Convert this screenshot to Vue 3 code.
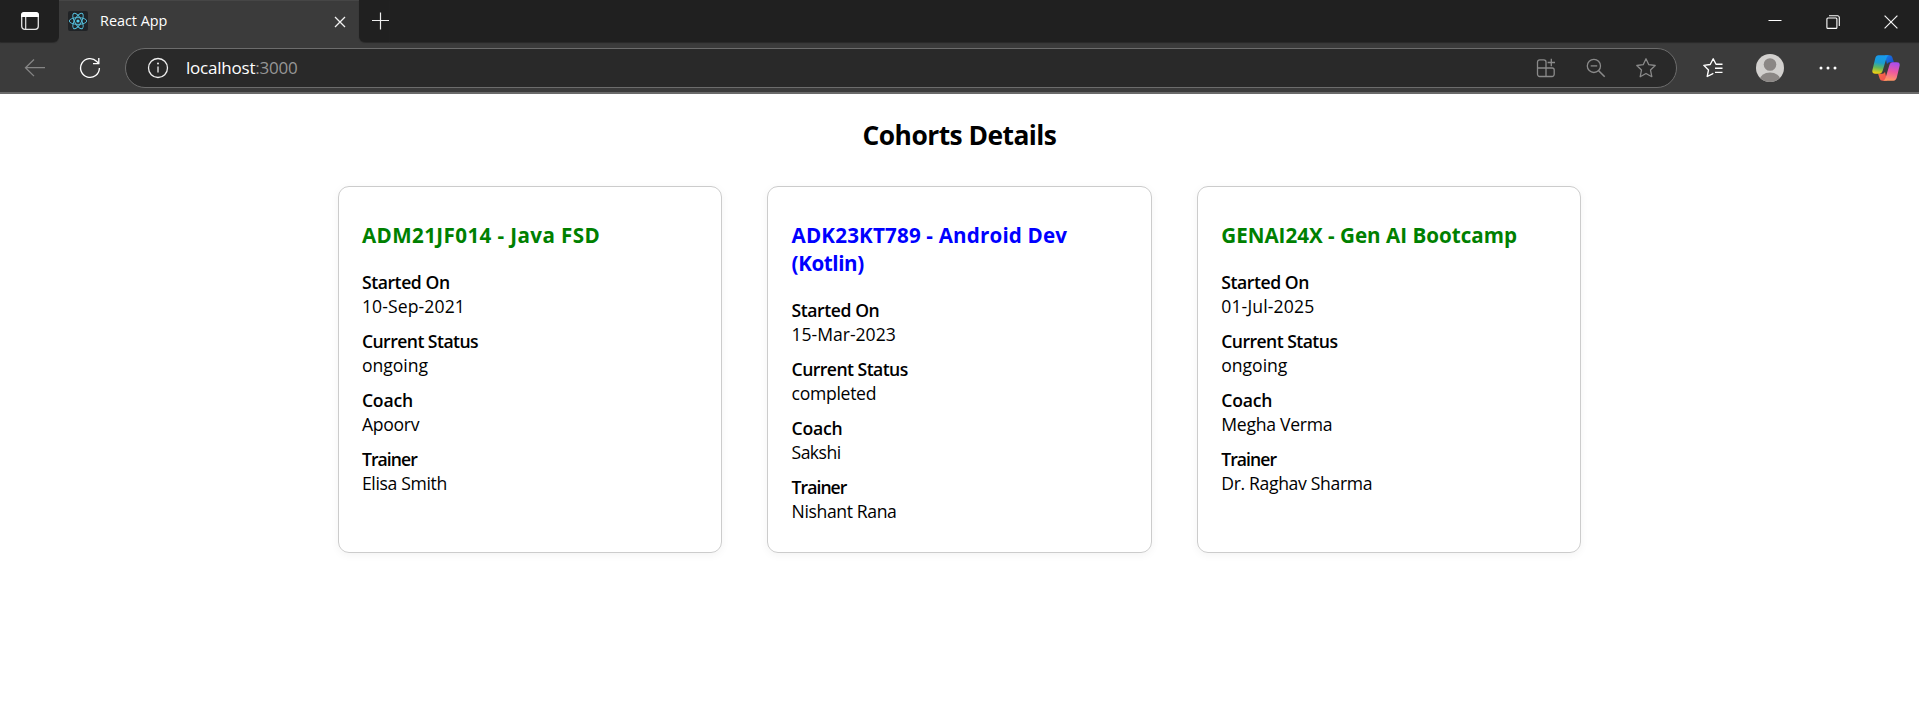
<script setup>
// "track" tunes the letter spacing (px) of each string.
const cohorts = [
  {
    id: 'ADM21JF014',
    status: 'ongoing',
    title: [{ text: 'ADM21JF014 - Java FSD', track: 0.4 }],
    fields: [
      { label: 'Started On', value: '10-Sep-2021', track: 0.1 },
      { label: 'Current Status', value: 'ongoing', track: -0.02 },
      { label: 'Coach', value: 'Apoorv', track: -0.3 },
      { label: 'Trainer', value: 'Elisa Smith', track: -0.35 },
    ],
  },
  {
    id: 'ADK23KT789',
    status: 'completed',
    title: [
      { text: 'ADK23KT789 - Android Dev ', track: 0.17 },
      { text: '(Kotlin)', track: -0.4 },
    ],
    fields: [
      { label: 'Started On', value: '15-Mar-2023', track: -0.03 },
      { label: 'Current Status', value: 'completed', track: -0.3 },
      { label: 'Coach', value: 'Sakshi', track: -0.55 },
      { label: 'Trainer', value: 'Nishant Rana', track: -0.38 },
    ],
  },
  {
    id: 'GENAI24X',
    status: 'ongoing',
    title: [{ text: 'GENAI24X - Gen AI Bootcamp', track: 0 }],
    fields: [
      { label: 'Started On', value: '01-Jul-2025', track: 0.14 },
      { label: 'Current Status', value: 'ongoing', track: -0.02 },
      { label: 'Coach', value: 'Megha Verma', track: -0.27 },
      { label: 'Trainer', value: 'Dr. Raghav Sharma', track: -0.34 },
    ],
  },
]
const labelTrack = { 'Started On': -0.43, 'Current Status': -0.55, Coach: -0.2, Trainer: -0.95 }
</script>

<template>
  <div class="window">
    <header class="tabs">
      <div class="tab-actions">
        <svg width="20" height="20" viewBox="0 0 20 20" fill="none">
          <rect x="1.7" y="1.7" width="16.6" height="16.6" rx="3" stroke="#e4e4e4" stroke-width="1.3" />
          <path d="M1 6V4.2A3.2 3.2 0 0 1 4.200 1h11.600A3.200 3.200 0 0 1 19 4.200V6z" fill="#fff" />
          <path d="M5.700 6v12" stroke="#e4e4e4" stroke-width="1.200" />
        </svg>
      </div>
      <div class="tab">
        <svg class="favicon" width="20" height="20" viewBox="0 0 20 20" fill="none" stroke="#53bdda" stroke-width=".95">
          <rect width="20" height="20" rx="2" fill="#202326" stroke="none" />
          <ellipse cx="10" cy="10" rx="8.700" ry="3.400" />
          <ellipse cx="10" cy="10" rx="8.700" ry="3.400" transform="rotate(60 10 10)" />
          <ellipse cx="10" cy="10" rx="8.700" ry="3.400" transform="rotate(120 10 10)" />
          <circle cx="10" cy="10" r="1.600" fill="#53d0f0" stroke="none" />
        </svg>
        <span class="tab-title">React App</span>
        <svg class="tab-close" width="12" height="12" viewBox="0 0 12 12" stroke="#f2f2f2" stroke-width="1.300">
          <path d="M1 1l10 10M11 1L1 11" />
        </svg>
      </div>
      <div class="new-tab">
        <svg width="18" height="18" viewBox="0 0 18 18" stroke="#eee" stroke-width="1.200"><path d="M8.500 .5v17M0 8.500h17" /></svg>
      </div>
      <div class="controls">
        <svg width="14" height="14" viewBox="0 0 14 14" stroke="#fff"><path d="M.5 5.500h13" /></svg>
        <svg width="14" height="14" viewBox="0 0 14 14" fill="none" stroke="#fff" stroke-width="1.100">
          <rect x=".9" y="3" width="10" height="10.400" rx="1" />
          <path d="M3 .8h8.500a1.800 1.800 0 0 1 1.800 1.800V11" />
        </svg>
        <svg width="14" height="14" viewBox="0 0 14 14" stroke="#f4f4f4" stroke-width="1.200"><path d="M.6.6l12.800 12.800M13.400.6L.6 13.400" /></svg>
      </div>
    </header>

    <nav class="toolbar">
      <svg class="back" width="22" height="20" viewBox="0 0 22 20" fill="none" stroke="#858585" stroke-width="1.300">
        <path d="M10 1.500L1.500 9.700l8.500 8.400M1.500 9.700H21" />
      </svg>
      <svg class="reload" width="22" height="22" viewBox="0 0 22 22" fill="none" stroke="#fff" stroke-width="1.350">
        <path d="M20.400 11A9.400 9.400 0 1 1 17.800 4.500L19.600 6.300" />
        <path d="M19.800 1v5.600h-5.800" />
      </svg>
      <div class="address">
        <svg class="info" width="22" height="22" viewBox="0 0 22 22" fill="none" stroke="#eee" stroke-width="1.300">
          <circle cx="11" cy="11" r="9.500" />
          <path d="M11 9.500v6" /><circle cx="11" cy="6.600" r="1" fill="#eee" stroke="none" />
        </svg>
        <span class="url">localhost<span class="port">:3000</span></span>
        <div class="page-actions">
          <svg width="20" height="20" viewBox="0 0 20 20" fill="none" stroke="#8a8a8a" stroke-width="1.300">
            <path d="M10 10V4a2.200 2.200 0 0 0-2.200-2.200H3.700A2.200 2.200 0 0 0 1.500 4v12.300a2.200 2.200 0 0 0 2.200 2.200H16a2.200 2.200 0 0 0 2.200-2.200V12A2 2 0 0 0 16.200 10H1.500M10 10v8.500M15.300.8v7.400M11.600 4.500H19" />
          </svg>
          <svg width="20" height="20" viewBox="0 0 20 20" fill="none" stroke="#8a8a8a" stroke-width="1.300">
            <circle cx="7.900" cy="7.900" r="6.600" /><path d="M4.700 7.900h6.500" /><path d="M12.700 12.700l6 6" stroke-width="1.600" />
          </svg>
          <svg width="22" height="22" viewBox="0 0 22 22" fill="none" stroke="#8a8a8a" stroke-width="1.300" stroke-linejoin="round">
            <path d="M11 1.800l2.800 5.900 6.400.8-4.700 4.500 1.300 6.700L11 16.500l-5.800 3.200L6.500 13 1.800 8.500l6.400-.8z" />
          </svg>
        </div>
      </div>
      <svg class="favorites" width="22" height="22" viewBox="0 0 22 22" fill="none" stroke="#fff" stroke-width="1.350" stroke-linejoin="round">
        <path d="M20.500 7.200H14L11.200 1.800 8.200 7.500 1.800 8.300l4.700 4.700-1.300 6.500 4.800-2.300 1.300-.9M13 11.200h7.500M13 15.300h7.500" />
      </svg>
      <svg class="avatar" width="28" height="28" viewBox="0 0 28 28">
        <defs><clipPath id="avatar-clip"><circle cx="14" cy="14" r="14" /></clipPath></defs>
        <g clip-path="url(#avatar-clip)">
          <rect width="28" height="28" fill="#d2d0ce" />
          <circle cx="14" cy="10.500" r="6.300" fill="#8b8785" />
          <ellipse cx="14" cy="26" rx="10.400" ry="7.600" fill="#8b8785" />
        </g>
      </svg>
      <svg class="more" width="18" height="4" viewBox="0 0 18 4" fill="#fff">
        <circle cx="2" cy="2" r="1.500" /><circle cx="9" cy="2" r="1.500" /><circle cx="16" cy="2" r="1.500" />
      </svg>
      <svg class="copilot" width="28" height="26" viewBox="0 0 28 26">
        <defs>
          <linearGradient id="cp-left" x1=".5" y1="0" x2=".35" y2="1">
            <stop offset="0" stop-color="#1799ef" /><stop offset=".4" stop-color="#1b9dcf" /><stop offset=".68" stop-color="#63b85a" /><stop offset="1" stop-color="#f5d211" />
          </linearGradient>
          <linearGradient id="cp-right" x1=".6" y1="0" x2=".4" y2="1">
            <stop offset="0" stop-color="#a64df0" /><stop offset=".5" stop-color="#ee58a0" /><stop offset="1" stop-color="#ff9a62" />
          </linearGradient>
          <linearGradient id="cp-top" x1="0" y1="0" x2="1" y2="1">
            <stop offset="0" stop-color="#1a7fe6" /><stop offset="1" stop-color="#1746c8" />
          </linearGradient>
          <linearGradient id="cp-bottom" x1="0" y1="0" x2="1" y2="1">
            <stop offset="0" stop-color="#f9723c" /><stop offset="1" stop-color="#f04a5a" />
          </linearGradient>
        </defs>
        <path d="M13 .3h4.500q2.200 0 2.900 2.200l1.500 4.800h-4.200q-2 0-2.700 2z" fill="url(#cp-top)" />
        <path d="M15 25.700h-4.500q-2.200 0-2.900-2.200L6.100 18.700h4.200q2 0 2.700-2z" fill="url(#cp-bottom)" />
        <path d="M6.500.3H17q-1.800.4-2.500 2.700l-4 13.300q-.8 2.400-3 2.400H3.200q-3.700 0-2.700-4L3.200 3.400Q4 .3 6.500.3z" fill="url(#cp-left)" />
        <path d="M21.500 25.700H11q1.800-.4 2.500-2.700l4-13.300q.8-2.400 3-2.400h4.300q3.700 0 2.700 4l-2.700 11.300q-.8 3.100-3.300 3.100z" fill="url(#cp-right)" />
      </svg>
    </nav>

    <main class="page">
      <h1>Cohorts Details</h1>
      <div class="cards">
        <section v-for="c in cohorts" :key="c.id" class="card">
          <h2 :class="c.status">
            <span v-for="p in c.title" :key="p.text" :style="{ letterSpacing: p.track + 'px' }">{{ p.text }}</span>
          </h2>
          <dl>
            <div v-for="f in c.fields" :key="f.label" class="field">
              <dt :style="{ letterSpacing: labelTrack[f.label] + 'px' }">{{ f.label }}</dt>
              <dd :style="{ letterSpacing: f.track + 'px' }">{{ f.value }}</dd>
            </div>
          </dl>
        </section>
      </div>
    </main>
  </div>
</template>

<style>
body {
  margin: 0;
  background: #fff;
}
</style>

<style scoped>
.window {
  height: 713px;
  overflow: hidden;
  font-family: "Open Sans", "Noto Sans", sans-serif;
  color: #000;
}
svg {
  display: block;
  flex: none;
}
.tabs {
  display: flex;
  height: 43px;
  background: #3b3b3b;
}
.tab-actions {
  width: 59px;
  height: 42px;
  box-sizing: border-box;
  padding: 11px 0 0 20px;
  background: #202020;
  border-bottom-right-radius: 6px;
  box-shadow: 0 1px 1px #2a2a2a;
}
.tab {
  display: flex;
  align-items: center;
  width: 300px;
  box-sizing: border-box;
  padding: 0 13.500px 1px 9px;
  background: #3b3b3b;
  box-shadow: inset 0 1px #464646;
}
.tab-title {
  flex: 1;
  margin-left: 12px;
  font-size: 14.4px;
  line-height: 20px;
  color: #fff;
}
.tab-close {
  margin-top: 2px;
}
.new-tab {
  height: 42px;
  box-sizing: border-box;
  padding: 12px 0 0 13px;
  background: #202020;
  border-bottom-left-radius: 6px;
  box-shadow: 0 1px 1px #2a2a2a;
}
.controls {
  display: flex;
  flex: 1;
  justify-content: flex-end;
  gap: 44px;
  height: 42px;
  box-sizing: border-box;
  padding: 15px 21px 0 0;
  background: #202020;
  box-shadow: 0 1px 1px #2a2a2a;
}
.toolbar {
  display: flex;
  align-items: center;
  height: 51px;
  box-sizing: border-box;
  padding: 0 19px 0 24px;
  background: #3b3b3b;
  border-bottom: 2px solid #6a6a6a;
}
.reload {
  margin-left: 33px;
}
.address {
  display: flex;
  align-items: center;
  width: 1552px;
  height: 40px;
  box-sizing: border-box;
  margin-left: 24px;
  padding: 0 19px 0 21px;
  background: #292929;
  border: 1px solid #6c6c6c;
  border-radius: 20px;
}
.url {
  margin-left: 17px;
  font-size: 17px;
  line-height: 24px;
  letter-spacing: -0.22px;
  color: #fff;
}
.port {
  color: #969696;
}
.page-actions {
  display: flex;
  align-items: center;
  gap: 29.500px;
  margin-left: auto;
}
.favorites {
  margin-left: 25px;
}
.avatar {
  margin-left: 32px;
}
.more {
  margin-left: 35px;
}
.copilot {
  margin-left: auto;
}
.page {
  padding-top: 23px;
}
h1 {
  margin: 0;
  font-size: 26.4px;
  line-height: 36px;
  font-weight: 700;
  letter-spacing: -0.54px;
  text-align: center;
}
.cards {
  display: grid;
  grid-template-columns: repeat(3, 1fr);
  gap: 45px;
  width: 1244px;
  margin: 33px auto 0;
}
.card {
  height: 367px;
  box-sizing: border-box;
  padding: 34px 23.400px 0;
  border: 1px solid #ccc;
  border-radius: 11px;
  box-shadow: 0 2px 9px rgba(0, 0, 0, 0.05);
}
h2 {
  margin: 0 0 21px;
  font-size: 20.6px;
  line-height: 28px;
  font-weight: 700;
}
.ongoing {
  color: #008000;
}
.completed {
  color: #00f;
}
dl {
  display: grid;
  gap: 11px;
  margin: 0;
  font-size: 17.6px;
  line-height: 24px;
}
dt {
  font-weight: 600;
}
dd {
  margin: 0;
}
</style>
